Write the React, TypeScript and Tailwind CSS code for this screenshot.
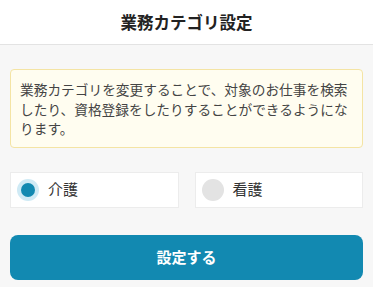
import React from "react";

export default function App() {
  return (
    <div
      className="w-full h-[287px] bg-[#f7f7f7] overflow-hidden"
      style={{ fontFamily: '"Noto Sans CJK JP", "Noto Sans", sans-serif' }}
    >
      <header className="h-[45px] bg-white border-b border-[#e3e3e3] flex items-center justify-center">
        <h1 className="text-[16.5px] font-bold text-[#222] leading-none">業務カテゴリ設定</h1>
      </header>
      <main className="px-[10px] pt-[24px]">
        <div className="border border-[#f4e4a4] bg-[#fffdf0] rounded-[4px] pl-[9px] pr-[4px] pt-[10px] pb-[8px] text-[13.7px] leading-[19.5px] text-[#444]">
          業務カテゴリを変更することで、対象のお仕事を検索したり、資格登録をしたりすることができるようになります。
        </div>
        <div className="mt-[24px] grid grid-cols-2 gap-[16px]">
          <label className="h-[36px] bg-white border border-[#ececec] flex items-center pl-[6px] gap-[9px]">
            <span className="w-[22px] h-[22px] rounded-full bg-[#cfeaf5] flex items-center justify-center">
              <span className="w-[14px] h-[14px] rounded-full bg-[#1289b1]" />
            </span>
            <span className="text-[15px] text-[#333]">介護</span>
          </label>
          <label className="h-[36px] bg-white border border-[#ececec] flex items-center pl-[6px] gap-[9px]">
            <span className="w-[22px] h-[22px] rounded-full bg-[#e3e3e3]" />
            <span className="text-[15px] text-[#333]">看護</span>
          </label>
        </div>
        <button className="mt-[27px] w-full h-[45px] rounded-[8px] bg-[#1289b1] text-white font-bold text-[15px]">
          設定する
        </button>
      </main>
    </div>
  );
}
